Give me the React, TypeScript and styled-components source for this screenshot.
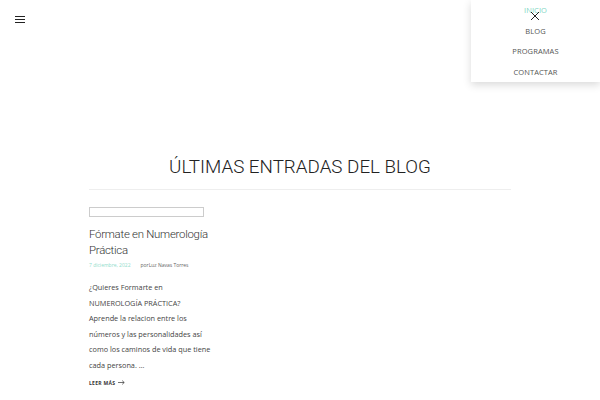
import React from "react";
import styled, { createGlobalStyle } from "styled-components";

const Global = createGlobalStyle`
  html, body { margin: 0; padding: 0; background: #fff; }
  body { font-family: "Open Sans", sans-serif; color: #333; }
  * { box-sizing: border-box; }
`;

const Page = styled.div`
  position: relative;
  width: 600px;
  height: 400px;
  overflow: hidden;
  background: #fff;
`;

const Header = styled.header`
  display: flex;
  align-items: flex-start;
  height: 140px;
  padding: 16px 0 0 15px;
`;

const Burger = styled.button`
  display: flex;
  flex-direction: column;
  gap: 2px;
  width: 10px;
  padding: 0;
  border: 0;
  background: none;
  span {
    display: block;
    height: 1px;
    background: #222;
    border-top: 1px solid #222;
  }
`;

const Menu = styled.nav`
  position: absolute;
  top: 0;
  right: 0;
  width: 129px;
  height: 82px;
  background: #fff;
  box-shadow: 0 3px 8px rgba(0, 0, 0, 0.15);
  display: flex;
  flex-direction: column;
  align-items: center;
  padding-top: 4px;
`;

const MenuItem = styled.a<{ $active?: boolean }>`
  flex: 0 0 20.6px;
  font-family: "Open Sans", sans-serif;
  font-size: 7.5px;
  letter-spacing: 0.1px;
  color: ${(p) => (p.$active ? "#7fd6c4" : "#555")};
  line-height: 12px;
  text-decoration: none;
`;

const Close = styled.svg`
  position: absolute;
  top: 11px;
  left: 59px;
`;

const Main = styled.main`
  width: 422px;
  margin: 0 auto;
`;

const Title = styled.h2`
  margin: 0;
  text-align: center;
  font-family: Roboto, sans-serif;
  font-weight: 300;
  font-size: 18.8px;
  color: #222;
  padding: 16px 0 11px;
  border-bottom: 1px solid #eee;
`;

const Card = styled.article`
  width: 140px;
  padding-top: 17px;
`;

const Thumb = styled.div`
  width: 115px;
  height: 10px;
  border: 1px solid #ccc;
`;

const PostTitle = styled.h3`
  margin: 10px 0 0;
  font-family: Roboto, sans-serif;
  font-weight: 300;
  font-size: 11.4px;
  letter-spacing: -0.25px;
  line-height: 15.5px;
  color: #333;
`;

const Meta = styled.div`
  display: flex;
  gap: 10px;
  font-size: 5px;
  margin-top: 4px;
  color: #666;
`;

const Date = styled.span`
  color: #8fdccb;
`;

const Excerpt = styled.p`
  width: 122px;
  margin: 12px 0 0;
  font-size: 7.3px;
  line-height: 15.6px;
  color: #444;
`;

const More = styled.a`
  display: flex;
  align-items: center;
  gap: 3px;
  margin-top: 6px;
  font-size: 5px;
  font-weight: 700;
  letter-spacing: 0.3px;
  color: #333;
  text-decoration: none;
`;

export default function App() {
  return (
    <Page>
      <Global />
      <Header>
        <Burger aria-label="menu">
          <span />
          <span />
          <span />
        </Burger>
      </Header>
      <Menu>
        <MenuItem $active>INICIO</MenuItem>
        <MenuItem>BLOG</MenuItem>
        <MenuItem>PROGRAMAS</MenuItem>
        <MenuItem>CONTACTAR</MenuItem>
        <Close width="10" height="10" viewBox="0 0 10 10">
          <path d="M1 1L9 9M9 1L1 9" stroke="#222" strokeWidth="1" />
        </Close>
      </Menu>
      <Main>
        <Title>ÚLTIMAS ENTRADAS DEL BLOG</Title>
        <Card>
          <Thumb />
          <PostTitle>Fórmate en Numerología Práctica</PostTitle>
          <Meta>
            <Date>7 diciembre, 2022</Date>
            <span>porLuz Navas Torres</span>
          </Meta>
          <Excerpt>
            ¿Quieres Formarte en NUMEROLOGÍA PRÁCTICA? Aprende la relacion entre los números y las personalidades así como los caminos de vida que tiene cada persona. …
          </Excerpt>
          <More>
            LEER MÁS
            <svg width="7" height="5" viewBox="0 0 7 5">
              <path d="M0 2.5H6.2M4.2 0.6L6.2 2.5L4.2 4.4" stroke="#333" strokeWidth="0.7" fill="none" />
            </svg>
          </More>
        </Card>
      </Main>
    </Page>
  );
}
